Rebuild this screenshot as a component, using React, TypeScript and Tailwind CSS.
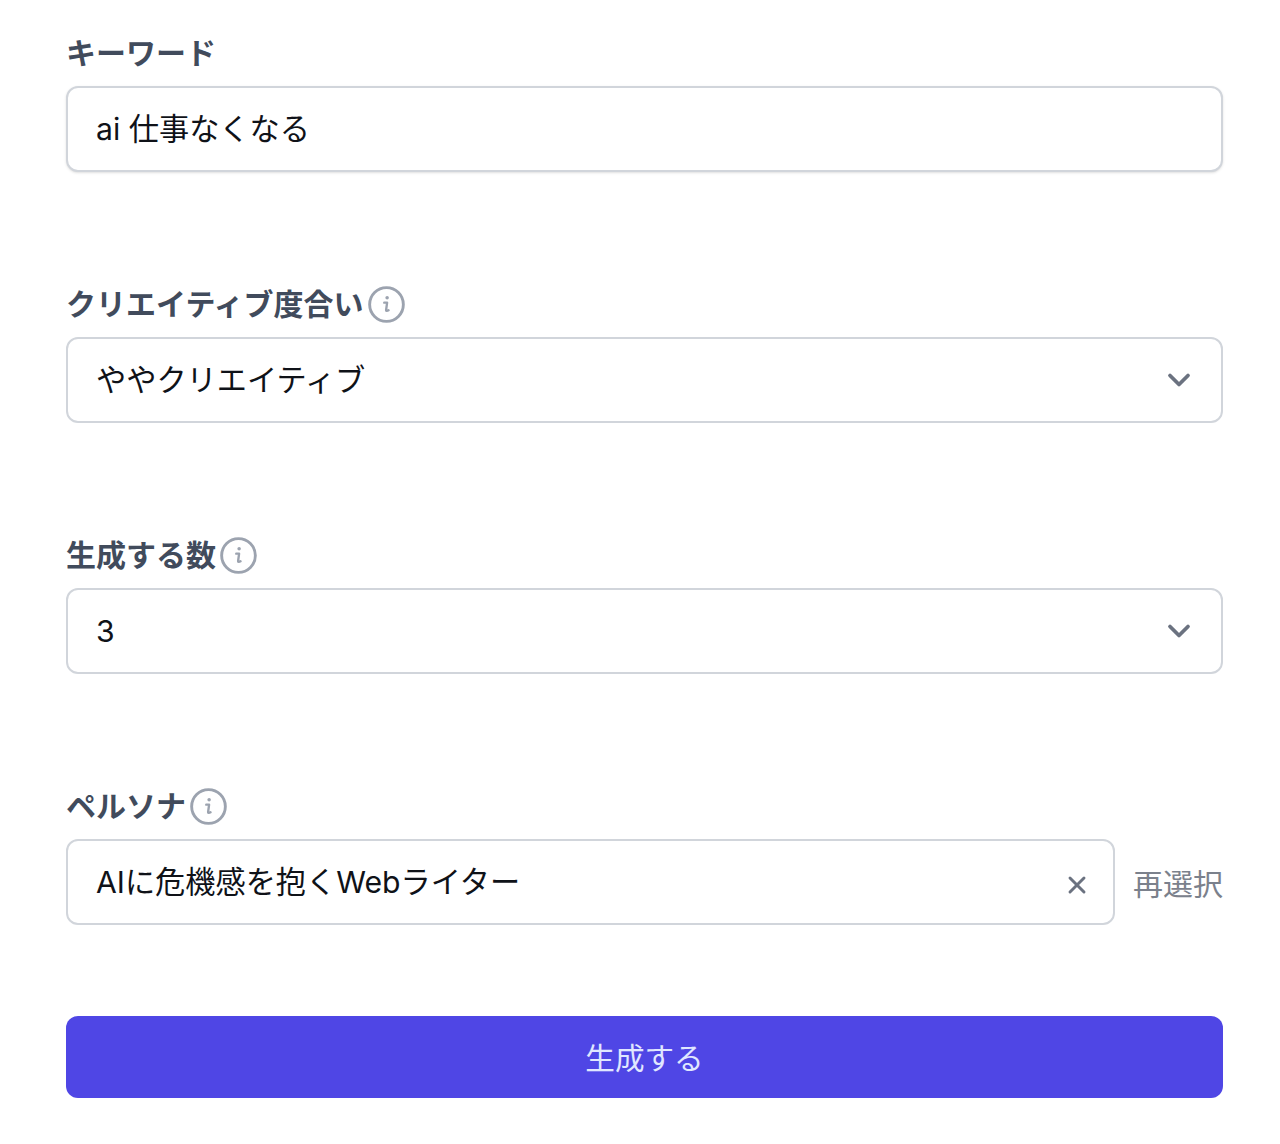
import { ChevronDown, X } from "lucide-react";

const font = { fontFamily: '"Inter", "Noto Sans CJK JP", sans-serif' };

const InfoIcon = () => (
  <svg viewBox="0 0 36 36" className="w-[37px] h-[37px] ml-[4px] shrink-0" fill="none">
    <circle cx="18" cy="18" r="16.4" stroke="#9ca3af" strokeWidth="2.8" />
    <circle cx="18.6" cy="11.4" r="1.7" fill="#9ca3af" />
    <path
      d="M15.8 16.2h2.8l-1 7.2c-.1.9.9 1.1 2.4.2"
      stroke="#9ca3af"
      strokeWidth="2.3"
      strokeLinecap="round"
      strokeLinejoin="round"
    />
  </svg>
);

const Label = ({ text, info }: { text: string; info?: boolean }) => (
  <div className="flex items-center h-[37px] mb-[14px]">
    <span className="text-[30px] font-bold text-[#414b5c] leading-[37px]">{text}</span>
    {info && <InfoIcon />}
  </div>
);

const Field = ({ value }: { value: string }) => (
  <div className="flex items-center h-[86px] pl-[28px] pr-[28px] bg-white border-2 border-[#d1d5db] rounded-[12px] shadow-sm text-[30.2px] text-[#0f1218]">
    <span className="pt-[2px]">{value}</span>
  </div>
);

const SelectField = ({ value }: { value: string }) => (
  <div className="flex items-center justify-between h-[86px] pl-[28px] pr-[24px] bg-white border-2 border-[#d1d5db] rounded-[12px] text-[30.2px] text-[#0f1218]">
    <span className="pt-[2px]">{value}</span>
    <ChevronDown className="w-[36px] h-[36px] text-[#6b7280]" strokeWidth={2.5} />
  </div>
);

export default function App() {
  return (
    <div className="w-[1280px] h-[1144px] bg-white overflow-hidden px-[66px] pt-[35px] pr-[57px]" style={font}>
      <Label text="キーワード" />
      <Field value="ai 仕事なくなる" />

      <div className="mt-[114px]">
        <Label text="クリエイティブ度合い" info />
        <SelectField value="ややクリエイティブ" />
      </div>

      <div className="mt-[114px]">
        <Label text="生成する数" info />
        <SelectField value="3" />
      </div>

      <div className="mt-[114px]">
        <Label text="ペルソナ" info />
        <div className="flex items-center">
          <div className="flex-1 flex items-center justify-between h-[86px] pl-[28px] pr-[22px] bg-white border-2 border-[#d1d5db] rounded-[12px] text-[30.2px] text-[#0f1218]">
            <span className="pt-[2px]">AIに危機感を抱くWebライター</span>
            <X className="w-[28px] h-[28px] mt-[6px] text-[#6b7280]" strokeWidth={2.5} />
          </div>
          <span className="ml-[18px] mt-[4px] text-[30px] text-[#7b818c]">再選択</span>
        </div>
      </div>

      <button className="block w-full h-[82px] mt-[91px] pt-[2px] bg-[#4f46e5] rounded-[12px] text-[29.6px] text-[#e0e7ff]">
        生成する
      </button>
    </div>
  );
}
